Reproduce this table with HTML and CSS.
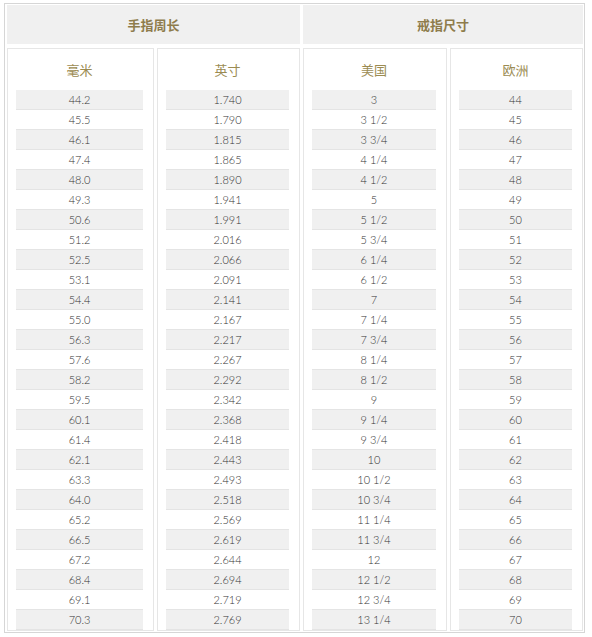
FILE: index.html
```html
<!DOCTYPE html>
<html>
<head>
<meta charset="utf-8">
<link rel="stylesheet" href="styles.css">
</head>
<body>
<div class="table">
  <div class="head">手指周长</div>
  <div class="head">戒指尺寸</div>
  <div class="col">
    <div class="title">毫米</div>
    <div class="rows">
      <div class="row">44.2</div><div class="row">45.5</div><div class="row">46.1</div><div class="row">47.4</div><div class="row">48.0</div><div class="row">49.3</div><div class="row">50.6</div><div class="row">51.2</div><div class="row">52.5</div><div class="row">53.1</div><div class="row">54.4</div><div class="row">55.0</div><div class="row">56.3</div><div class="row">57.6</div><div class="row">58.2</div><div class="row">59.5</div><div class="row">60.1</div><div class="row">61.4</div><div class="row">62.1</div><div class="row">63.3</div><div class="row">64.0</div><div class="row">65.2</div><div class="row">66.5</div><div class="row">67.2</div><div class="row">68.4</div><div class="row">69.1</div><div class="row">70.3</div>
    </div>
  </div>
  <div class="col">
    <div class="title">英寸</div>
    <div class="rows">
      <div class="row">1.740</div><div class="row">1.790</div><div class="row">1.815</div><div class="row">1.865</div><div class="row">1.890</div><div class="row">1.941</div><div class="row">1.991</div><div class="row">2.016</div><div class="row">2.066</div><div class="row">2.091</div><div class="row">2.141</div><div class="row">2.167</div><div class="row">2.217</div><div class="row">2.267</div><div class="row">2.292</div><div class="row">2.342</div><div class="row">2.368</div><div class="row">2.418</div><div class="row">2.443</div><div class="row">2.493</div><div class="row">2.518</div><div class="row">2.569</div><div class="row">2.619</div><div class="row">2.644</div><div class="row">2.694</div><div class="row">2.719</div><div class="row">2.769</div>
    </div>
  </div>
  <div class="col">
    <div class="title">美国</div>
    <div class="rows">
      <div class="row">3</div><div class="row">3 1/2</div><div class="row">3 3/4</div><div class="row">4 1/4</div><div class="row">4 1/2</div><div class="row">5</div><div class="row">5 1/2</div><div class="row">5 3/4</div><div class="row">6 1/4</div><div class="row">6 1/2</div><div class="row">7</div><div class="row">7 1/4</div><div class="row">7 3/4</div><div class="row">8 1/4</div><div class="row">8 1/2</div><div class="row">9</div><div class="row">9 1/4</div><div class="row">9 3/4</div><div class="row">10</div><div class="row">10 1/2</div><div class="row">10 3/4</div><div class="row">11 1/4</div><div class="row">11 3/4</div><div class="row">12</div><div class="row">12 1/2</div><div class="row">12 3/4</div><div class="row">13 1/4</div>
    </div>
  </div>
  <div class="col">
    <div class="title">欧洲</div>
    <div class="rows">
      <div class="row">44</div><div class="row">45</div><div class="row">46</div><div class="row">47</div><div class="row">48</div><div class="row">49</div><div class="row">50</div><div class="row">51</div><div class="row">52</div><div class="row">53</div><div class="row">54</div><div class="row">55</div><div class="row">56</div><div class="row">57</div><div class="row">58</div><div class="row">59</div><div class="row">60</div><div class="row">61</div><div class="row">62</div><div class="row">63</div><div class="row">64</div><div class="row">65</div><div class="row">66</div><div class="row">67</div><div class="row">68</div><div class="row">69</div><div class="row">70</div>
    </div>
  </div>
</div>
</body>
</html>
```

FILE: styles.css
```css
html, body {
  margin: 0;
  padding: 0;
  background: #ffffff;
}
body {
  font-family: Lato, "Noto Sans CJK SC", sans-serif;
}
.table {
  margin: 3px 0 0 4px;
  width: 581px;
  box-sizing: border-box;
  border: 1px solid #d6d6d6;
  padding: 1px 1px 1px 2px;
  display: grid;
  grid-template-columns: 147px 143px 144px 133px;
  column-gap: 3px;
  row-gap: 4px;
}
.head {
  grid-column: span 2;
  height: 39px;
  line-height: 39px;
  background: #f0f0f0;
  text-align: center;
  font-family: "Noto Sans CJK SC", sans-serif;
  font-weight: bold;
  font-size: 13px;
  color: #8e7c4c;
}
.col {
  border: 1px solid #e6e6e6;
  padding: 0 10px 0 8px;
}
.title {
  height: 41px;
  line-height: 41px;
  text-align: center;
  font-family: "Noto Sans CJK SC", sans-serif;
  font-size: 13px;
  color: #9b8b52;
}
.row {
  height: 19px;
  line-height: 19px;
  border-bottom: 1px solid #e4e4e4;
  text-align: center;
  font-size: 11px;
  font-weight: 300;
  color: #333333;
}
.row:nth-child(odd) {
  background: #f0f0f0;
}
```
